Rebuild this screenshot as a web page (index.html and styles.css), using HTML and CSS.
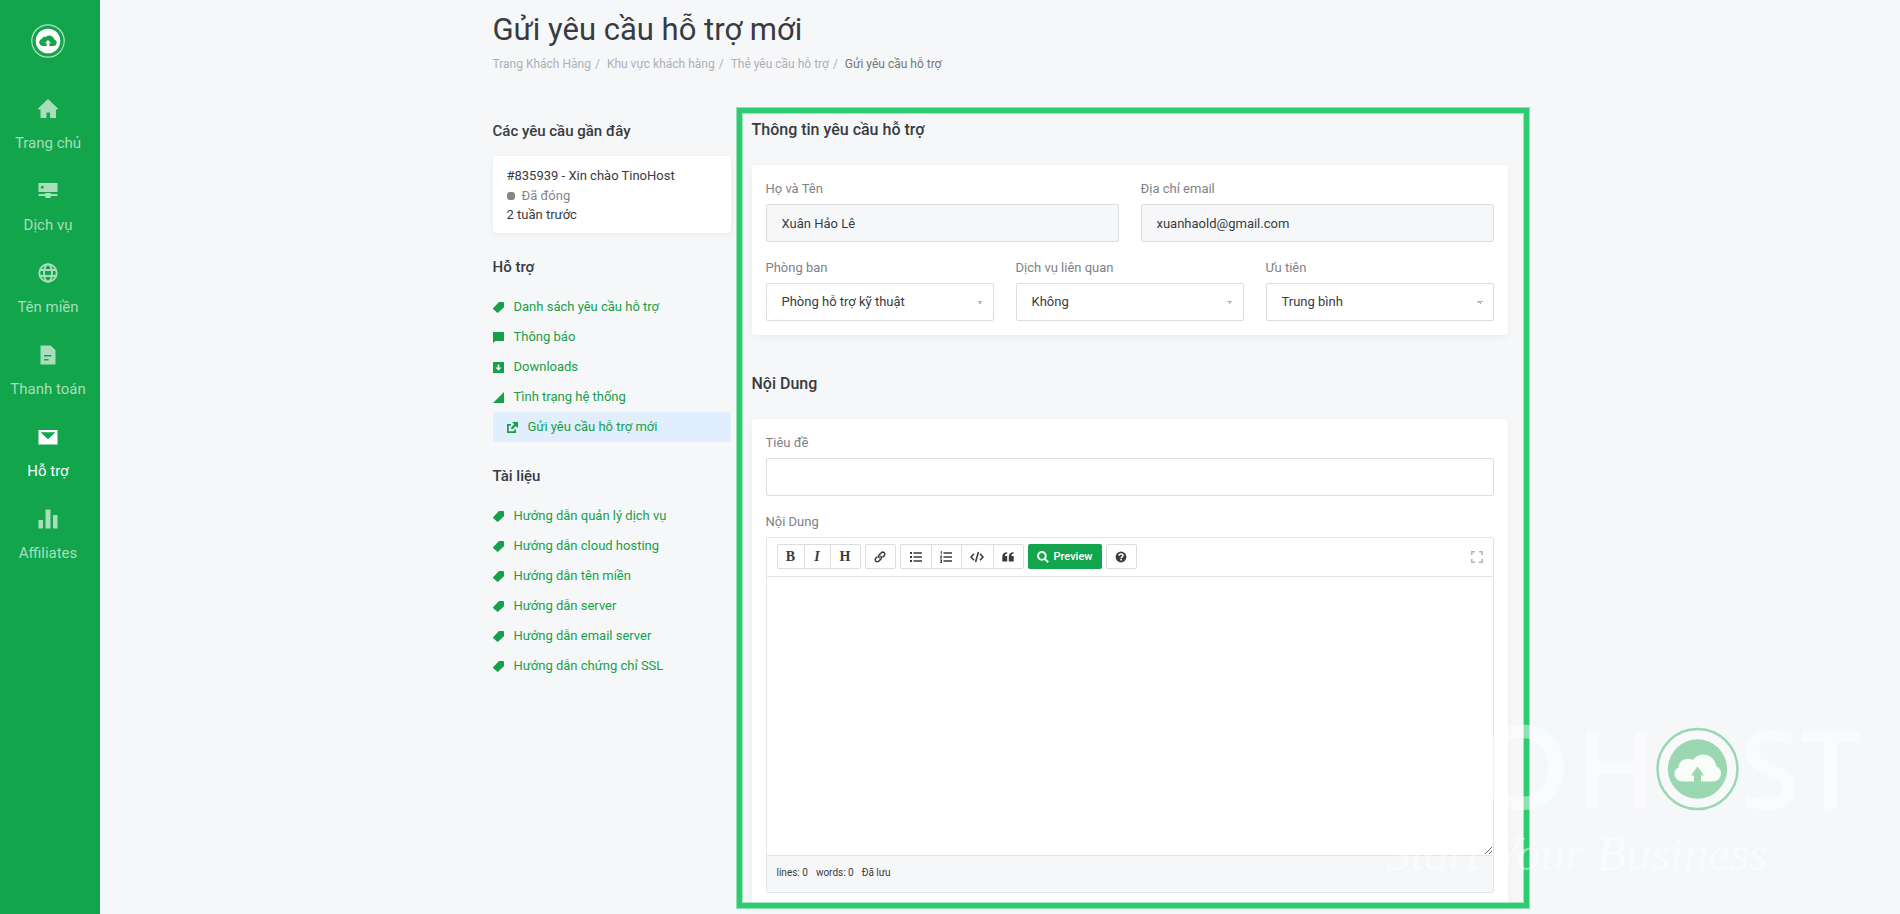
FILE: index.html
```html
<!DOCTYPE html>
<html lang="vi">
<head>
<meta charset="utf-8">
<title>Gửi yêu cầu hỗ trợ mới</title>
<link rel="stylesheet" href="styles.css">
</head>
<body>
<svg class="defs" aria-hidden="true">
  <symbol id="i-tag" viewBox="0 0 11 11"><path d="M6 0h4Q11 0 11 1v4.200L5.300 10.600Q4.600 11.200 4 10.600L.3 7.300Q-.2 6.700.3 6z"/></symbol>
  <symbol id="i-comment" viewBox="0 0 11 11"><path d="M0 0h11v9H2.500L0 11z"/></symbol>
  <symbol id="i-download" viewBox="0 0 11 11"><path fill-rule="evenodd" d="M0 0h11v11H0zM4.700 2.500v3H2.500l3 3.200 3-3.200H6.300v-3z"/></symbol>
  <symbol id="i-signal" viewBox="0 0 11 11"><path d="M11 0v11H0z"/></symbol>
  <symbol id="i-external" viewBox="0 0 11 11"><path d="M0 2h4v1.700H1.700v5.600h5.600V7.500H9V11H0zM5 0h6v6L8.900 3.900 5.200 7.500 3.700 6l3.600-3.700z"/></symbol>
</svg>

<div class="app">
  <nav class="sidebar" aria-label="Menu chính">
    <a class="logo" href="#" aria-label="TinoHost">
      <svg viewBox="0 0 34 34"><circle cx="17" cy="17" r="16.200" fill="none" stroke="#b5e2c5" stroke-width="1.200"/><circle cx="17" cy="17" r="12.300" fill="#fff"/><path fill="#12a54b" d="M11.500 22a3.600 3.600 0 0 1-.8-7 3.700 3.700 0 0 1 4.300-2.200 5 5 0 0 1 8.300 2.600 3.400 3.400 0 0 1-.3 6.600z"/><path fill="#fff" d="M17 16l3 3.300h-1.800V24h-2.400v-4.700H14z"/></svg>
    </a>
    <a class="nav-item" href="#"><svg viewBox="0 0 20 20"><path d="M10 0l10 9.500-.8 1H18V19h-6v-5.500H8.500V19H2.500v-8.500H.8L0 9.500z"/></svg><span>Trang chủ</span></a>
    <a class="nav-item" href="#"><svg viewBox="0 0 20 20"><path fill-rule="evenodd" d="M.5 2h19v9H.5zM3 5v2.500h2.500V5zM.5 13h6.300l1-1h4.400l1 1h6.300v2h-6.300l-1 2H7.800l-1-2H.5z"/></svg><span>Dịch vụ</span></a>
    <a class="nav-item" href="#"><svg viewBox="0 0 20 20"><g fill="none" stroke="currentColor" stroke-width="1.900"><circle cx="10" cy="10" r="8.700"/><ellipse cx="10" cy="10" rx="4" ry="8.700"/><path d="M1.500 7h17M1.500 13h17"/></g></svg><span>Tên miền</span></a>
    <a class="nav-item" href="#"><svg viewBox="0 0 20 20"><path fill-rule="evenodd" d="M2.500.5h10l5 4.500v14.500h-15zM6 10v1.600h7.500V10zM6 14v1.600h4.500V14z"/></svg><span>Thanh toán</span></a>
    <a class="nav-item current" href="#"><svg viewBox="0 0 20 20"><path fill-rule="evenodd" d="M.5 3h19v14.500H.5zM2.500 5.200L10 12.300l7.500-7.100z"/></svg><span>Hỗ trợ</span></a>
    <a class="nav-item" href="#"><svg viewBox="0 0 20 20"><path d="M.5 11h4.500v8.500H.5zM7.500.5h5v19h-5zM15 6h4.500v13.500H15z"/></svg><span>Affiliates</span></a>
  </nav>

  <div class="page">
    <header class="page-head">
      <h1>Gửi yêu cầu hỗ trợ mới</h1>
      <ol class="crumbs">
        <li><a href="#">Trang Khách Hàng</a></li>
        <li><a href="#">Khu vực khách hàng</a></li>
        <li><a href="#">Thẻ yêu cầu hỗ trợ</a></li>
        <li class="here">Gửi yêu cầu hỗ trợ</li>
      </ol>
    </header>

    <div class="columns">
      <aside class="side">
        <h3>Các yêu cầu gần đây</h3>
        <a class="ticket" href="#">
          <span>#835939 - Xin chào TinoHost</span>
          <span class="status">Đã đóng</span>
          <span>2 tuần trước</span>
        </a>

        <h3>Hỗ trợ</h3>
        <ul class="links">
          <li><a href="#"><svg><use href="#i-tag"/></svg>Danh sách yêu cầu hỗ trợ</a></li>
          <li><a href="#"><svg><use href="#i-comment"/></svg>Thông báo</a></li>
          <li><a href="#"><svg><use href="#i-download"/></svg>Downloads</a></li>
          <li><a href="#"><svg><use href="#i-signal"/></svg>Tình trạng hệ thống</a></li>
          <li><a class="active" href="#"><svg><use href="#i-external"/></svg>Gửi yêu cầu hỗ trợ mới</a></li>
        </ul>

        <h3>Tài liệu</h3>
        <ul class="links">
          <li><a href="#"><svg><use href="#i-tag"/></svg>Hướng dẫn quản lý dịch vụ</a></li>
          <li><a href="#"><svg><use href="#i-tag"/></svg>Hướng dẫn cloud hosting</a></li>
          <li><a href="#"><svg><use href="#i-tag"/></svg>Hướng dẫn tên miền</a></li>
          <li><a href="#"><svg><use href="#i-tag"/></svg>Hướng dẫn server</a></li>
          <li><a href="#"><svg><use href="#i-tag"/></svg>Hướng dẫn email server</a></li>
          <li><a href="#"><svg><use href="#i-tag"/></svg>Hướng dẫn chứng chỉ SSL</a></li>
        </ul>
      </aside>

      <main class="main">
        <h2>Thông tin yêu cầu hỗ trợ</h2>
        <section class="card">
          <div class="row">
            <div class="field"><label for="name">Họ và Tên</label><input id="name" type="text" value="Xuân Hảo Lê" readonly></div>
            <div class="field"><label for="email">Địa chỉ email</label><input id="email" type="email" value="xuanhaold@gmail.com" readonly></div>
          </div>
          <div class="row">
            <div class="field"><label for="dept">Phòng ban</label><select id="dept"><option>Phòng hỗ trợ kỹ thuật</option></select></div>
            <div class="field"><label for="service">Dịch vụ liên quan</label><select id="service"><option>Không</option></select></div>
            <div class="field"><label for="priority">Ưu tiên</label><select id="priority"><option>Trung bình</option></select></div>
          </div>
        </section>

        <h2>Nội Dung</h2>
        <section class="card">
          <div class="field"><label for="subject">Tiêu đề</label><input id="subject" type="text"></div>
          <div class="field">
            <label for="message">Nội Dung</label>
            <div class="editor">
              <div class="toolbar">
                <div class="group">
                  <button type="button" class="glyph" aria-label="Bold">B</button>
                  <button type="button" class="glyph slanted" aria-label="Italic">I</button>
                  <button type="button" class="glyph wide" aria-label="Heading">H</button>
                </div>
                <div class="group">
                  <button type="button" class="single" aria-label="Link"><svg viewBox="0 0 12 12"><g fill="none" stroke="currentColor" stroke-width="1.500" stroke-linecap="round"><path d="M5.200 6.800a2 2 0 0 1 0-2.900L7.300 1.800a2.050 2.050 0 0 1 2.900 2.900L9 5.900"/><path d="M6.800 5.200a2 2 0 0 1 0 2.900L4.700 10.200a2.050 2.050 0 0 1-2.900-2.900L3 6.100"/></g></svg></button>
                </div>
                <div class="group">
                  <button type="button" class="wide" aria-label="Bullet list"><svg viewBox="0 0 12 12"><path d="M0 1h2v2H0zM0 5h2v2H0zM0 9h2v2H0zM3.500 1.200H12v1.500H3.500zM3.500 5.200H12v1.500H3.500zM3.500 9.200H12v1.500H3.500z"/></svg></button>
                  <button type="button" class="wide" aria-label="Numbered list"><svg viewBox="0 0 12 12"><path d="M.8 0h1v3.200h-1zM0 4.500h2v1.200L1 6.700h1v.8H0v-1l1-1.200H0zM0 8.600h2V12H0v-.8h1v-.6H.3v-.7H1v-.5H0zM3.500 1.200H12v1.500H3.500zM3.500 5.200H12v1.500H3.500zM3.500 9.200H12v1.500H3.500z"/></svg></button>
                  <button type="button" class="wider" aria-label="Code"><svg class="svg-code" viewBox="0 0 14 12"><path fill="none" stroke="currentColor" stroke-width="1.600" d="M4 2.800L1 6l3 3.200M10 2.800L13 6l-3 3.200M8.400 1L5.600 11"/></svg></button>
                  <button type="button" class="wide" aria-label="Quote"><svg viewBox="0 0 12 12"><path d="M5.200 1.300v1.200C3.600 2.700 3 3.500 3 5h2.200v5.500H.3V5.500C.3 3 2 1.400 5.200 1.300zM11.700 1.300v1.200C10.100 2.700 9.500 3.500 9.500 5h2.200v5.500H6.800V5.500c0-2.500 1.700-4.100 4.900-4.200z"/></svg></button>
                </div>
                <button type="button" class="preview"><svg viewBox="0 0 12 12"><g fill="none" stroke="currentColor" stroke-width="2"><circle cx="4.900" cy="4.900" r="3.800"/><path d="M7.600 7.600l3.600 3.600"/></g></svg>Preview</button>
                <div class="group">
                  <button type="button" class="single" aria-label="Help"><svg viewBox="0 0 12 12"><circle cx="6" cy="6" r="5.400"/><path fill="none" stroke="#fff" stroke-width="1.500" d="M4 4.800c0-2.500 4-2.300 4-.2 0 1.300-1.900 1.300-1.900 2.700"/><path fill="#fff" d="M5.300 8.100h1.600v1.500H5.300z"/></svg></button>
                </div>
                <button type="button" class="full" aria-label="Fullscreen"><svg viewBox="0 0 12 12"><path fill="none" stroke="currentColor" stroke-width="1.600" d="M.8 4V.8H4M8 .8h3.200V4M11.200 8v3.200H8M4 11.200H.8V8"/></svg></button>
              </div>
              <textarea id="message"></textarea>
              <div class="editor-foot"><span>lines: 0</span><span>words: 0</span><span>Đã lưu</span></div>
            </div>
          </div>
        </section>
      </main>
    </div>
  </div>
</div>

<svg class="watermark" viewBox="0 0 480 170" aria-hidden="true">
  <g fill="#fff" fill-opacity=".45">
    <g class="wm-name"><text class="wm-o" x="86" y="93">O</text><text x="186" y="93">H</text><text x="350" y="93">S</text><text x="410" y="93">T</text></g>
    <text class="wm-line" x="-4" y="154">Start Your Business</text>
  </g>
  <g>
    <circle cx="307.500" cy="53" r="40" fill="#fff" fill-opacity=".3" stroke="#9bd8b1" stroke-width="2.500"/>
    <circle cx="307.500" cy="53" r="29.700" fill="#9bd8b1"/>
    <path fill="#fff" fill-opacity=".93" d="M293 65.500c-5 0-8.500-3.500-8.500-8 0-3 1.500-5 4-6 0-7 8-11 14.500-7.500 6-9 21-7 23.500 6.500 3.500 1.500 4.500 4 4.500 6.500 0 5-3.500 8.500-8.500 8.500z"/>
    <path fill="#9bd8b1" d="M307.500 50.500l6.500 9h-3v8h-7v-8h-3z"/>
  </g>
</svg>
</body>
</html>
```
FILE: styles.css
```css
* { box-sizing: border-box; }

body {
  margin: 0;
  background: #f6f7f9;
  color: #383b41;
  font: 13px/20px Roboto, "Noto Sans", sans-serif;
}

a { color: inherit; text-decoration: none; }
h1, h2, h3, ul, ol { margin: 0; padding: 0; }
ul, ol { list-style: none; }
svg { fill: currentColor; }
button, input, select, textarea { font: inherit; color: inherit; }
.defs { position: absolute; width: 0; height: 0; }

.app { display: flex; min-height: 100vh; }

/* Sidebar */
.sidebar {
  flex: 0 0 100px;
  display: flex;
  flex-direction: column;
  align-items: center;
  padding: 24px 4px 0 0;
  background: #12a54b;
}
.logo { margin-bottom: 41px; }
.logo svg { display: block; width: 34px; height: 34px; }
.nav-item {
  display: flex;
  flex-direction: column;
  align-items: center;
  gap: 14px;
  height: 82px;
  color: #a8deba;
  font-size: 15px;
  white-space: nowrap;
}
.nav-item svg { width: 20px; height: 20px; }
.nav-item.current { color: #fff; }

/* Page */
.page { flex: 1; min-width: 0; }
.page-head, .columns {
  max-width: 1015px;
  margin: 0 auto;
}
.page-head { padding-top: 10px; }
h1 { font-size: 31px; line-height: 40px; font-weight: 400; }
.crumbs { display: flex; margin-top: 4px; font-size: 12px; color: #adb0b6; }
.crumbs li + li::before { content: "/"; padding: 0 7px 0 4px; color: #adb0b6; }
.crumbs .here { color: #73767d; }

.columns { display: flex; gap: 21px; margin-top: 33px; }
.side { flex: 0 0 238px; padding-top: 13px; }
.main { flex: 1; min-width: 0; position: relative; padding-top: 12px; }
.main::after {
  content: "";
  position: absolute;
  inset: 1px -21px -1px -15px;
  border: 5px solid #2ecc71;
  box-shadow: 0 0 0 1px rgba(46, 204, 113, .5), inset 0 0 0 1px rgba(46, 204, 113, .4);
  pointer-events: none;
}

h3 { font-size: 15px; line-height: 22px; font-weight: 500; margin-bottom: 14px; }
h2 { font-size: 16px; line-height: 22px; font-weight: 500; margin-bottom: 24px; }

.ticket, .card {
  background: #fff;
  border-radius: 4px;
  box-shadow: 0 2px 8px rgba(0, 0, 0, .05);
}
.ticket {
  display: flex;
  flex-direction: column;
  padding: 10px 14px 8px;
  margin-bottom: 23px;
}
.status { display: flex; align-items: center; gap: 7px; color: #85858a; line-height: 19px; }
.status::before {
  content: "";
  width: 8px;
  height: 8px;
  border-radius: 3px;
  background: #868686;
}

.links { margin-bottom: 23px; color: #16a04a; }
.links a { display: flex; align-items: center; gap: 10px; height: 30px; }
.links svg { width: 11px; height: 11px; }
.links .active { padding-left: 14px; background: #e1eefd; border-radius: 3px; }

.card { padding: 14px; margin-bottom: 38px; }
.card:last-child { margin-bottom: 0; }
.row { display: flex; gap: 22px; }
.row + .row, .card > .field + .field { margin-top: 16px; }
.field { flex: 1; min-width: 0; }
.field label { display: block; margin-bottom: 5px; color: #7f7f88; }
.field input, .field select {
  display: block;
  width: 100%;
  height: 38px;
  padding: 0 15px;
  border: 1px solid #dcdde1;
  border-radius: 2px;
  background: #fff;
}
.field input[readonly] { background: #f6f7f9; }
.field select {
  appearance: none;
  background:
    linear-gradient(to bottom left, #b0b2bc 50%, transparent 50%) no-repeat right 13px center / 3px 3px,
    linear-gradient(to bottom right, #b0b2bc 50%, transparent 50%) no-repeat right 10px center / 3px 3px,
    #fff;
}

/* Editor */
.editor { border: 1px solid #e3e4e7; border-radius: 2px; }
.toolbar {
  display: flex;
  gap: 4px;
  padding: 6px 10px 7px;
  border-bottom: 1px solid #e3e4e7;
}
.group { display: flex; border: 1px solid #dcdde1; border-radius: 2px; }
.toolbar button {
  display: flex;
  align-items: center;
  justify-content: center;
  border: 0;
  padding: 0;
  height: 23px;
  width: 26px;
  background: none;
}
.group button + button { border-left: 1px solid #dcdde1; }
.toolbar .single { width: 29px; }
.toolbar .wide { width: 30px; }
.toolbar .wider { width: 32px; }
.toolbar svg { width: 12px; height: 12px; }
.toolbar .svg-code { width: 14px; }
.toolbar .glyph { font: bold 14px/20px "Liberation Serif", serif; }
.toolbar .slanted { font-style: italic; }
.toolbar .preview {
  width: 74px;
  height: 25px;
  gap: 5px;
  border-radius: 2px;
  background: #12a54b;
  color: #fff;
  font-size: 11px;
  font-weight: 500;
}
.toolbar .full { margin-left: auto; width: 12px; height: 25px; color: #b4b4bc; }
.editor textarea {
  display: block;
  width: 100%;
  height: 278px;
  padding: 10px;
  border: 0;
  resize: vertical;
  background: #fff;
}
.editor-foot {
  display: flex;
  gap: 8px;
  padding: 7px 10px 9px;
  border-top: 1px solid #e3e4e7;
  background: #f6f7f9;
  font-size: 10px;
}

/* Brand watermark over the lower right corner */
.watermark {
  position: fixed;
  right: 30px;
  bottom: 28px;
  width: 480px;
  height: 170px;
  overflow: visible;
  pointer-events: none;
}
.wm-name { font: 600 108px "Open Sans", sans-serif; }
.wm-name .wm-o { font: bold 114px Lato, sans-serif; }
.wm-line { font: italic 49px "Liberation Serif", serif; }
```
